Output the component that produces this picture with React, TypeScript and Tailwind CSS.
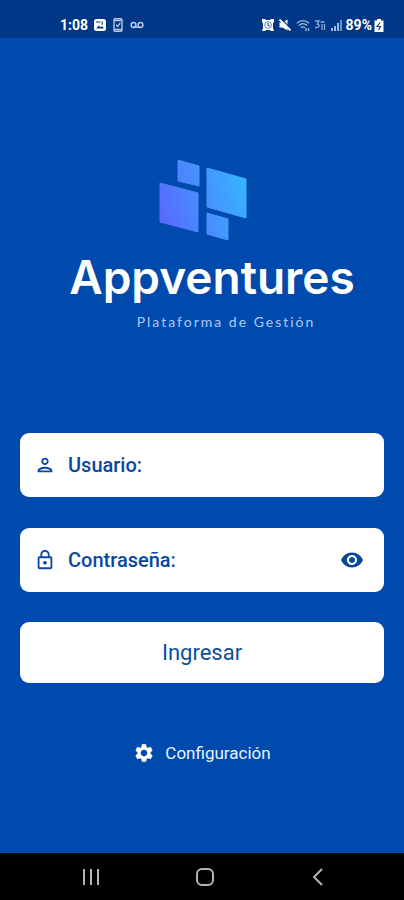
import { useState } from 'react'
import { MdOutlinePerson, MdLockOutline, MdVisibility, MdVisibilityOff, MdSettings } from 'react-icons/md'

function StatusBar() {
  return (
    <div className="flex h-[38px] items-center justify-between bg-[#003887] pt-3 pr-5 pl-[60px] text-white">
      <div className="flex items-center gap-1.5">
        <span className="text-sm leading-4 font-bold">1:08</span>
        <svg width="12" height="12" viewBox="0 0 12 12">
          <rect width="12" height="12" rx="2.5" fill="#fff" />
          <path d="M2.3 9.5l2.5-3 1.8 1.7 1.5-1.2 1.8 2.5z" fill="#003887" />
          <path d="M2 3h4.5M8.2 2.5v3.2" stroke="#003887" strokeWidth="1.1" />
        </svg>
        <svg width="12" height="14" viewBox="0 0 12 14" fill="none" stroke="#b5c9e8">
          <rect x="2" y=".7" width="8" height="12.6" rx="1" strokeWidth="1.4" />
          <path d="M2 2.5h8M2 11.5h8" strokeWidth="1.6" />
          <path d="M4.2 6.8l1.5 1.6L8.2 5" strokeWidth="1.3" />
        </svg>
        <svg width="14" height="8" viewBox="0 0 14 8" fill="none" stroke="#b5c9e8" strokeWidth="1.5">
          <circle cx="3.5" cy="4" r="2.4" />
          <circle cx="10.5" cy="4" r="2.4" />
          <path d="M3.5 6.2h7" />
        </svg>
      </div>
      <div className="flex items-center gap-1">
        <svg width="12" height="12" viewBox="0 0 12 12">
          <path d="M0 0h3l1 1h4l1-1h3v3l-1 1v5l1 3H9l-1-1H4l-1 1H0l1-3V4L0 3z" fill="#fff" />
          <circle cx="6" cy="6" r="3.4" fill="none" stroke="#003887" strokeWidth=".6" />
          <path d="M6 3.8v2.4l1.7.8" fill="none" stroke="#003887" />
        </svg>
        <svg width="14" height="12" viewBox="0 0 14 12">
          <path d="M1.500 3.500h3L9.500.5v11l-5-3h-3z" fill="#fff" />
          <path d="M3.500.3l9.500 9" stroke="#003887" strokeWidth="1.200" />
          <path d="M1.500.5l11 11" stroke="#fff" strokeWidth="1.800" />
        </svg>
        <svg width="14" height="12" viewBox="0 0 14 12" fill="none" stroke="#9fbbe5" strokeWidth="1.3">
          <path d="M1 4.2c3.5-3.5 8.5-3.5 12 0M3 6.5c2.5-2.3 5.5-2.3 8 0M5 8.7c1.3-1 2.7-1 4 0" />
          <path d="M10 9v3M12.5 9v3" />
        </svg>
        <svg width="12" height="12" viewBox="0 0 12 12" fill="none" stroke="#8aaadb" strokeWidth="1.3">
          <path d="M1 2h4L3.3 5C6 5 6 9 1 8.5" />
          <path d="M8 5v6M10.5 5v6M6.5 3h4" />
        </svg>
        <svg width="12" height="12" viewBox="0 0 12 12">
          <path d="M1 9h2v3H1zM4 7h2v5H4zM7 4h2v8H7z" fill="#9fbbe5" />
          <path d="M10 1h2v11h-2z" fill="#6f94cd" />
        </svg>
        <span className="flex items-center gap-0.5">
          <span className="text-sm leading-4 font-bold">89%</span>
          <svg width="10" height="13" viewBox="0 0 10 13">
            <path d="M3 0h4v1.5h2.5V13H.5V1.5H3z" fill="#fff" />
            <path d="M6 3.5l-3 4h3.5L4.5 11" fill="none" stroke="#003887" strokeWidth="1.1" />
          </svg>
        </span>
      </div>
    </div>
  )
}

function Logo() {
  return (
    <svg width="90" height="84" viewBox="-1 0 90 84" strokeWidth="1" strokeLinejoin="round">
      <defs>
        <linearGradient id="tiles" gradientUnits="userSpaceOnUse" x1="0" y1="56" x2="88" y2="28">
          <stop offset="0" stopColor="#5869ff" />
          <stop offset="1" stopColor="#37b3ff" />
        </linearGradient>
      </defs>
      <g fill="url(#tiles)" stroke="url(#tiles)">
        <path d="M20 2l21 6v20l-21-5z" />
        <path d="M49 10l39 11v39L49 49z" />
        <path d="M2 25l38 10v39L2 64z" />
        <path d="M49 55l21 6v21l-21-6z" />
      </g>
    </svg>
  )
}

export default function App() {
  const [user, setUser] = useState('')
  const [password, setPassword] = useState('')
  const [showPassword, setShowPassword] = useState(false)

  return (
    <div className="flex min-h-screen flex-col bg-[#004aad] font-['Roboto',sans-serif]">
      <StatusBar />

      <main className="flex flex-1 flex-col items-center px-5 pt-[120px]">
        {/* Brand */}
        <Logo />
        <h1 className="mt-2 ml-5 font-['Inter',sans-serif] text-[46px] leading-[54px] font-semibold text-white">
          Appventures
        </h1>
        <p className="mt-2 ml-12 font-['Lato',sans-serif] text-sm leading-5 tracking-[2px] text-[#a9c9f5]">
          Plataforma de Gestión
        </p>

        {/* Login form */}
        <form className="mt-[101px] flex w-full flex-col gap-[30px]" onSubmit={(e) => e.preventDefault()}>
          <div className="flex flex-col gap-[31px]">
            <div className="flex h-16 items-center rounded-[9px] bg-white pr-5 pl-3.5 text-[#0a479f]">
              <MdOutlinePerson className="h-[22px] w-[22px] shrink-0" />
              <label htmlFor="user" className="ml-3 text-[20px] leading-6 font-medium">Usuario:</label>
              <input
                id="user"
                type="text"
                value={user}
                onChange={(e) => setUser(e.target.value)}
                className="ml-2 min-w-0 flex-1 text-[20px] outline-none"
              />
            </div>
            <div className="flex h-16 items-center rounded-[9px] bg-white pr-5 pl-3.5 text-[#0a479f]">
              <MdLockOutline className="h-6 w-[22px] shrink-0" />
              <label htmlFor="password" className="ml-3 text-[20px] leading-6 font-medium">Contraseña:</label>
              <input
                id="password"
                type={showPassword ? 'text' : 'password'}
                value={password}
                onChange={(e) => setPassword(e.target.value)}
                className="ml-2 min-w-0 flex-1 text-[20px] outline-none"
              />
              <button type="button" aria-label="Mostrar contraseña" onClick={() => setShowPassword(!showPassword)}>
                {showPassword ? <MdVisibilityOff className="h-6 w-6" /> : <MdVisibility className="h-6 w-6" />}
              </button>
            </div>
          </div>
          <button type="submit" className="h-[61px] rounded-[9px] bg-white text-[22px] leading-7 text-[#0a4f9f]">
            Ingresar
          </button>
        </form>

        <button type="button" className="mt-[58px] mb-8 flex items-center gap-2.5 text-[17px] leading-6 text-[#eaf2ff]">
          <MdSettings className="h-[22px] w-[22px] text-white" />
          Configuración
        </button>
      </main>

      {/* Android navigation */}
      <nav className="flex h-[47px] items-center justify-between bg-black pr-[75px] pl-20 text-[#b4b4b4]">
        <button type="button" aria-label="Recientes">
          <svg width="22" height="22" viewBox="0 0 22 22" fill="none" stroke="currentColor" strokeWidth="2">
            <path d="M4 3v16M11 3v16M18 3v16" />
          </svg>
        </button>
        <button type="button" aria-label="Inicio">
          <svg width="22" height="22" viewBox="0 0 22 22" fill="none" stroke="currentColor" strokeWidth="2">
            <rect x="3" y="3" width="16" height="16" rx="5" />
          </svg>
        </button>
        <button type="button" aria-label="Atrás">
          <svg width="22" height="22" viewBox="0 0 22 22" fill="none" stroke="currentColor" strokeWidth="2">
            <path d="M15 3l-8 8 8 8" />
          </svg>
        </button>
      </nav>
    </div>
  )
}
